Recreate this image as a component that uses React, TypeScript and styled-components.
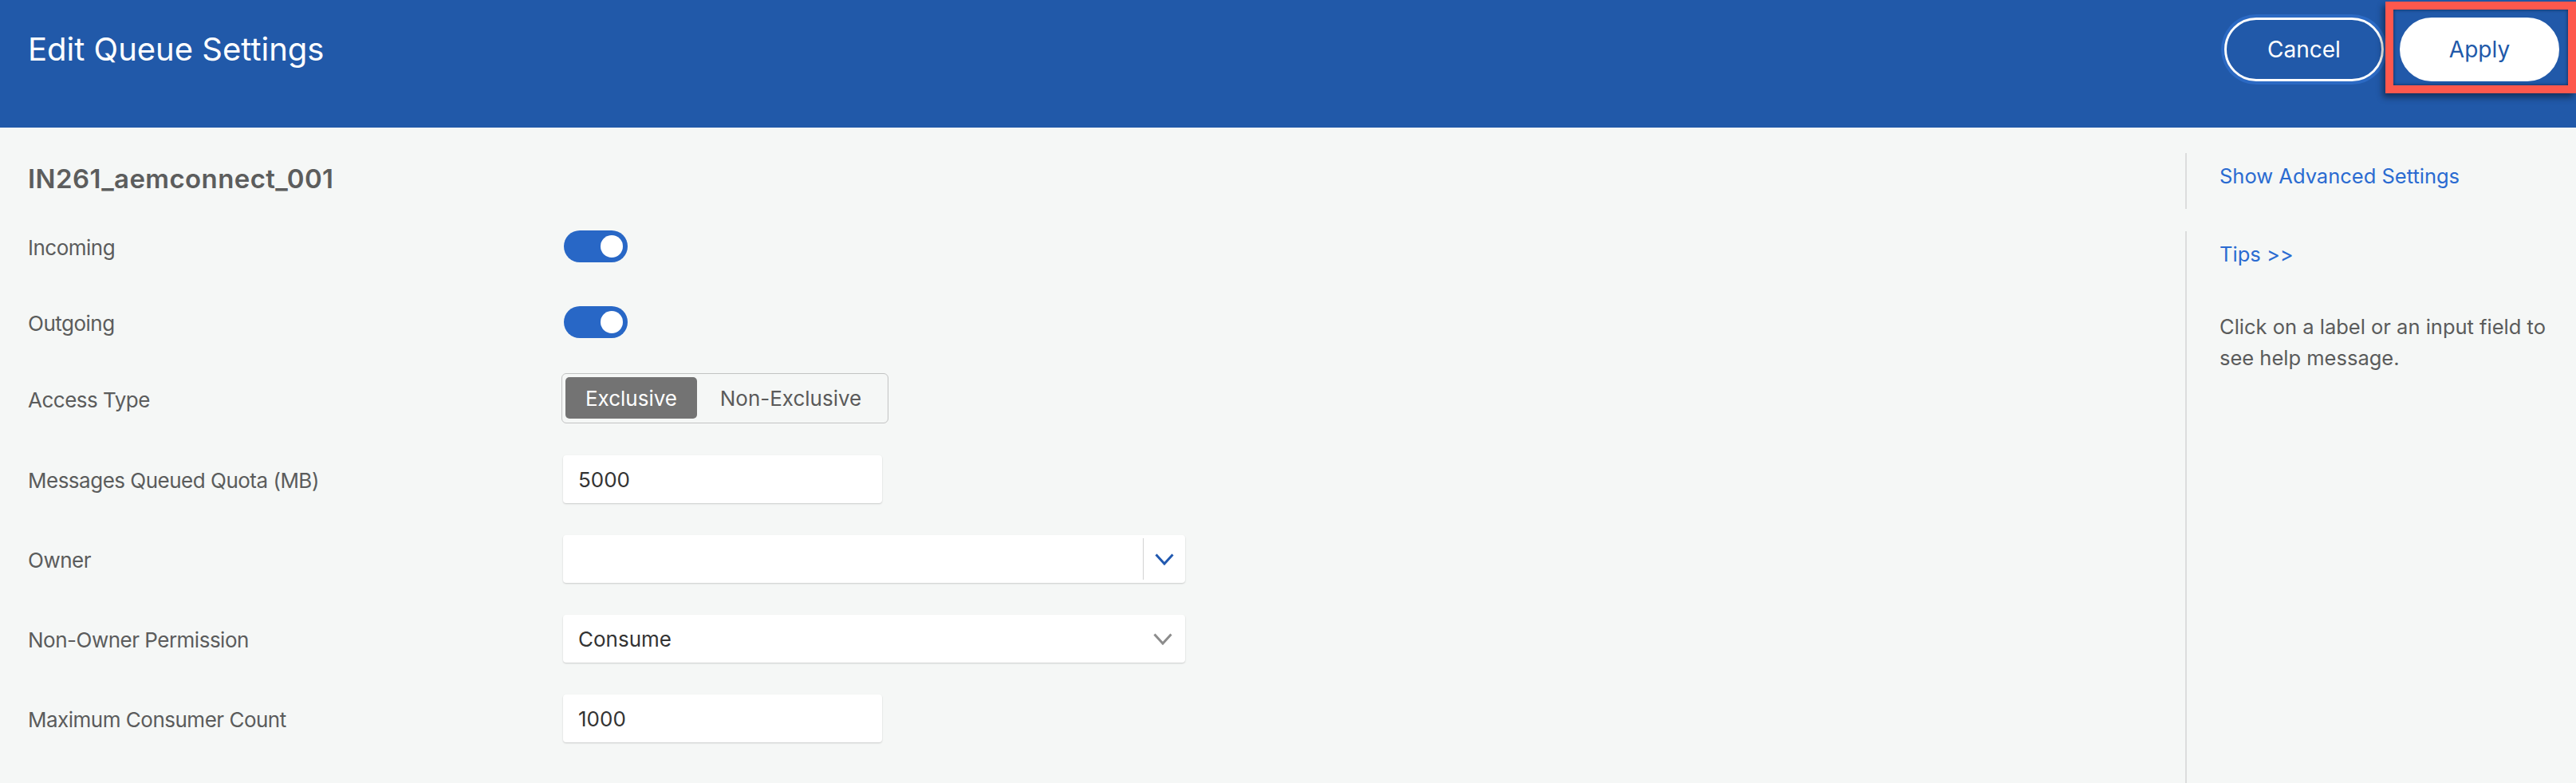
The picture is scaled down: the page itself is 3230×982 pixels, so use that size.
import React from "react";
import styled, { createGlobalStyle } from "styled-components";

const GlobalStyle = createGlobalStyle`
  html, body {
    margin: 0;
    padding: 0;
    background: #f5f7f6;
  }
  body {
    font-family: Inter, "Noto Sans", "Liberation Sans", sans-serif;
    color: #5b5c5c;
  }
  * { box-sizing: border-box; }
`;

const Page = styled.div`
  min-height: 982px;
  display: flex;
  flex-direction: column;
`;

const Header = styled.header`
  height: 160px;
  background: #2159a9;
  display: flex;
  justify-content: space-between;
  align-items: flex-start;
  padding: 22px 21px 0 35px;
`;

const Title = styled.h1`
  margin: 0;
  font-size: 40px;
  font-weight: 400;
  line-height: 80px;
  color: #ffffff;
  letter-spacing: 0px;
`;

const Actions = styled.div`
  display: flex;
  gap: 20px;
`;

const PillButton = styled.button<{ $primary?: boolean }>`
  width: 200px;
  height: 80px;
  border-radius: 40px;
  font-family: inherit;
  font-size: 28px;
  cursor: pointer;
  border: 3px solid #ffffff;
  background: ${(p) => (p.$primary ? "#ffffff" : "transparent")};
  color: ${(p) => (p.$primary ? "#2159a9" : "#ffffff")};
  box-shadow: ${(p) => (p.$primary ? "none" : "0 0 0 4px #2b69c3")};
`;

const ApplyWrap = styled.div`
  position: relative;
`;

const Highlight = styled.div`
  position: absolute;
  left: -18px;
  top: -20px;
  right: -21px;
  bottom: -15px;
  border: 10px solid #fe584d;
  box-shadow: -3px 5px 8px rgba(0, 0, 0, 0.45), inset 0 0 4px rgba(0, 0, 0, 0.55);
  pointer-events: none;
`;

const Body = styled.main`
  flex: 1;
  display: flex;
`;

const FormArea = styled.section`
  flex: 1;
  padding: 44px 0 0 35px;
`;

const QueueName = styled.h2`
  margin: 0;
  font-size: 33px;
  font-weight: 600;
  line-height: 40px;
  color: #5c5d5d;
  letter-spacing: 0.4px;
`;

const FormRow = styled.div<{ $space: number; $height?: number }>`
  display: grid;
  grid-template-columns: 671px auto;
  align-items: center;
  margin-top: ${(p) => p.$space}px;
  height: ${(p) => p.$height ?? 60}px;
`;

const Label = styled.label`
  font-size: 26px;
  color: #5b5c5c;
  letter-spacing: -0.5px;
  padding-top: 3px;
`;

const Toggle = styled.div`
  width: 80px;
  height: 40px;
  margin-left: 1px;
  border-radius: 20px;
  background: #2867c6;
  display: flex;
  align-items: center;
  justify-content: flex-end;
  padding-right: 6px;
`;

const Knob = styled.span`
  width: 28px;
  height: 28px;
  border-radius: 50%;
  background: #ffffff;
`;

const Segmented = styled.div`
  width: 410px;
  height: 63px;
  margin-left: -2px;
  border: 1.5px solid #c2c3c3;
  border-radius: 6px;
  padding: 4px;
  display: flex;
`;

const Segment = styled.div<{ $active?: boolean; $width: number }>`
  width: ${(p) => p.$width}px;
  height: 52px;
  border-radius: 5px;
  display: flex;
  align-items: center;
  justify-content: center;
  font-size: 26px;
  background: ${(p) => (p.$active ? "#737373" : "transparent")};
  color: ${(p) => (p.$active ? "#ffffff" : "#5a5a5a")};
`;

const Field = styled.div<{ $wide?: boolean }>`
  width: ${(p) => (p.$wide ? 780 : 400)}px;
  height: 60px;
  background: #ffffff;
  border-radius: 4px;
  box-shadow: 0 1px 2px rgba(0, 0, 0, 0.18);
  display: flex;
  align-items: center;
  padding-left: 19px;
  font-size: 26px;
  color: #333333;
`;

const FieldValue = styled.span`
  flex: 1;
`;

const SelectDivider = styled.span`
  width: 1px;
  align-self: stretch;
  margin: 4px 0;
  background: #d2d2d2;
`;

const ChevronBox = styled.span<{ $w: number }>`
  width: ${(p) => p.$w}px;
  display: flex;
  align-items: center;
  justify-content: center;
`;

const Sidebar = styled.aside`
  width: 490px;
  padding-top: 32px;
  display: flex;
  flex-direction: column;
  gap: 28px;
`;

const SideBlock = styled.div<{ $grow?: boolean }>`
  border-left: 2px solid #dcdddd;
  padding: 11px 30px 0 41px;
  ${(p) => (p.$grow ? "flex: 1;" : "height: 70px;")}
`;

const LinkText = styled.a`
  display: block;
  font-size: 25.5px;
  line-height: 36px;
  color: #2a6bd1;
  text-decoration: none;
  cursor: pointer;
`;

const HelpText = styled.p`
  margin: 53px 0 0;
  font-size: 25.5px;
  line-height: 39px;
  color: #5a5b5b;
`;

const Chevron = ({ color }: { color: string }) => (
  <svg width="24" height="15" viewBox="0 0 24 15" fill="none">
    <path d="M1.5 1.5 L12 13 L22.5 1.5" stroke={color} strokeWidth="3" strokeLinejoin="miter" />
  </svg>
);

export default function App() {
  return (
    <Page>
      <GlobalStyle />
      <Header>
        <Title>Edit Queue Settings</Title>
        <Actions>
          <PillButton>Cancel</PillButton>
          <ApplyWrap>
            <PillButton $primary>Apply</PillButton>
            <Highlight />
          </ApplyWrap>
        </Actions>
      </Header>
      <Body>
        <FormArea>
          <QueueName>IN261_aemconnect_001</QueueName>
          <FormRow $space={35}>
            <Label>Incoming</Label>
            <Toggle>
              <Knob />
            </Toggle>
          </FormRow>
          <FormRow $space={35}>
            <Label>Outgoing</Label>
            <Toggle>
              <Knob />
            </Toggle>
          </FormRow>
          <FormRow $space={34} $height={63}>
            <Label>Access Type</Label>
            <Segmented>
              <Segment $active $width={165}>Exclusive</Segment>
              <Segment $width={235}>Non-Exclusive</Segment>
            </Segmented>
          </FormRow>
          <FormRow $space={40}>
            <Label>Messages Queued Quota (MB)</Label>
            <Field>5000</Field>
          </FormRow>
          <FormRow $space={40}>
            <Label>Owner</Label>
            <Field $wide>
              <FieldValue />
              <SelectDivider />
              <ChevronBox $w={52}>
                <Chevron color="#2159b0" />
              </ChevronBox>
            </Field>
          </FormRow>
          <FormRow $space={40}>
            <Label>Non-Owner Permission</Label>
            <Field $wide>
              <FieldValue>Consume</FieldValue>
              <ChevronBox $w={56}>
                <Chevron color="#8c8c8c" />
              </ChevronBox>
            </Field>
          </FormRow>
          <FormRow $space={40}>
            <Label>Maximum Consumer Count</Label>
            <Field>1000</Field>
          </FormRow>
        </FormArea>
        <Sidebar>
          <SideBlock>
            <LinkText>Show Advanced Settings</LinkText>
          </SideBlock>
          <SideBlock $grow>
            <LinkText>Tips &gt;&gt;</LinkText>
            <HelpText>Click on a label or an input field to see help message.</HelpText>
          </SideBlock>
        </Sidebar>
      </Body>
    </Page>
  );
}
